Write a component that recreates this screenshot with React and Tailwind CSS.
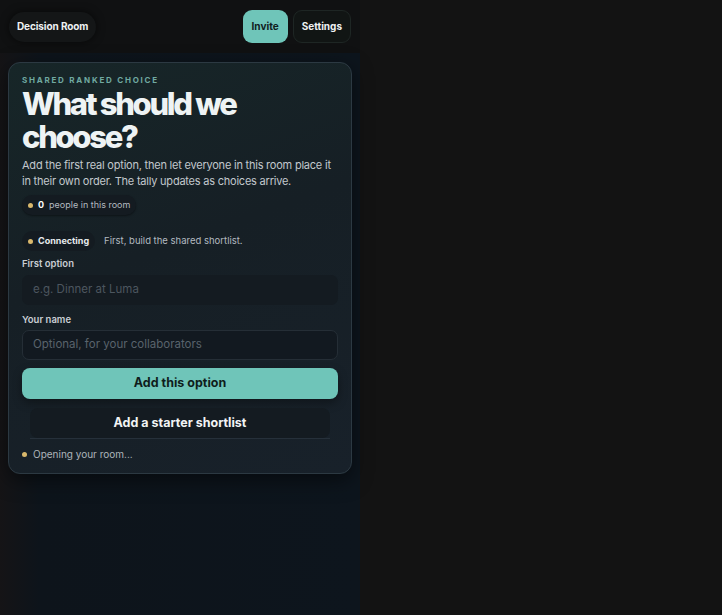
import React from 'react'

function Dot() {
  return <span className="inline-block h-[5px] w-[5px] rounded-full bg-[#d9b86c]" />
}

export default function App() {
  return (
    <div
      className="flex min-h-screen w-full bg-[#131313] text-white"
      style={{ fontFamily: 'Inter, "Noto Sans", sans-serif' }}
    >
      <div className="flex min-h-screen w-[360px] flex-col bg-[linear-gradient(90deg,#151416_0%,#0d141b_11%,#0d151d_100%)]">
        {/* Top bar */}
        <header className="flex h-[53px] items-center justify-between bg-[#101112] px-[9px]">
          <div className="flex h-[30px] items-center rounded-full bg-[#141617] px-[8px] shadow-[0_0_8px_rgba(0,0,0,0.6)]">
            <span className="text-[10px] font-bold tracking-[-0.01em] text-[#eef1f2]">Decision Room</span>
          </div>
          <div className="flex items-center gap-[5px]">
            <button className="h-[33px] rounded-[9px] bg-[#6fc5b9] px-[9px] text-[10px] font-bold text-[#10201e]">
              Invite
            </button>
            <button className="h-[33px] rounded-[9px] border border-[#1e2624] bg-[#111514] px-[8px] text-[10px] font-bold text-[#eef1f2]">
              Settings
            </button>
          </div>
        </header>

        {/* Card */}
        <div className="px-[8px] pt-[9px]">
          <div className="rounded-[12px] border border-[#2c3942] bg-[linear-gradient(160deg,#172628_0%,#161f25_45%,#18212a_100%)] px-[13px] pb-[11px] pt-[11px] shadow-[0_6px_20px_rgba(0,0,0,0.5)]">
            <p className="text-[8px] font-bold uppercase tracking-[0.22em] text-[#70a9a1]">Shared ranked choice</p>
            <h1 className="mt-[1px] text-[31px] font-extrabold leading-[33px] tracking-[-0.075em] text-[#eef3f4]">
              What should we
              <br />
              choose?
            </h1>
            <p className="mt-[5px] text-[11px] leading-[15.5px] tracking-[-0.02em] text-[#c2c8cd]">
              Add the first real option, then let everyone in this room place it in their own order. The tally updates as choices arrive.
            </p>

            <div className="mt-[6px] flex">
              <div className="flex h-[20px] items-center gap-[5px] rounded-full bg-[#141b21] px-[6px] shadow-[0_1px_2px_rgba(0,0,0,0.4)]">
                <Dot />
                <span className="text-[9px] font-bold text-white">0</span>
                <span className="text-[9px] text-[#b3bac0]">people in this room</span>
              </div>
            </div>

            <div className="mt-[16px] flex items-center gap-[9px]">
              <div className="flex h-[20px] items-center gap-[5px] rounded-full bg-[#141b21] px-[6px]">
                <Dot />
                <span className="text-[9px] font-bold text-[#e8ecee]">Connecting</span>
              </div>
              <span className="text-[9.5px] text-[#b3bac0]">First, build the shared shortlist.</span>
            </div>

            <label className="mt-[7px] block text-[9.5px] font-semibold leading-[12px] text-[#c9ced3]">First option</label>
            <div className="mt-[5px] flex h-[30px] items-center rounded-[7px] bg-[#141b21] px-[11px]">
              <span className="text-[11.5px] text-[#4c565f]">e.g. Dinner at Luma</span>
            </div>

            <label className="mt-[9px] block text-[9.5px] font-semibold leading-[12px] text-[#c9ced3]">Your name</label>
            <div className="mt-[4px] flex h-[30px] items-center rounded-[7px] border border-[#252e36] bg-[#121920] px-[10px]">
              <span className="text-[11.5px] text-[#59636c]">Optional, for your collaborators</span>
            </div>

            <button className="mt-[8px] flex h-[31px] w-full items-center justify-center rounded-[8px] bg-[#6fc5b9] text-[12.5px] font-bold text-[#0f1d1c] shadow-[0_4px_10px_rgba(0,0,0,0.35)]">
              Add this option
            </button>

            <div className="mx-[8px] mt-[9px] border-b border-[#26303a]">
              <button className="flex h-[30px] w-full items-center justify-center rounded-[8px] bg-[#141b21] text-[12.5px] font-bold text-[#f2f4f5]">
                Add a starter shortlist
              </button>
            </div>

            <div className="mt-[8px] flex items-center gap-[6px]">
              <Dot />
              <span className="text-[10px] text-[#aeb5bb]">Opening your room...</span>
            </div>
          </div>
        </div>
      </div>
      <div className="flex-1" />
    </div>
  )
}
